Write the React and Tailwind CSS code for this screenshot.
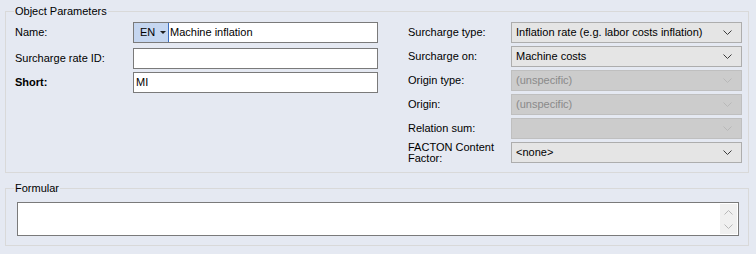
import React from "react";

const font = { fontFamily: '"Liberation Sans", Arial, sans-serif' };

function Chevron({ disabled, up }) {
  return (
    <svg width="9" height="5" viewBox="0 0 9 5" className="block">
      <polyline
        points={up ? "0.5,4.5 4.5,0.5 8.5,4.5" : "0.5,0.5 4.5,4.5 8.5,0.5"}
        fill="none"
        stroke={disabled ? "#b8b8b8" : "#3c3c3c"}
        strokeWidth="1"
      />
    </svg>
  );
}

function Combo({ value, disabled }) {
  return (
    <div
      className={`h-[21px] w-[231px] flex items-center justify-between pl-[4px] pr-[9px] border ${
        disabled
          ? "bg-[#cccccc] border-[#bfbfbf] text-[#8a8a8a]"
          : "bg-[#e5e5e5] border-[#adadad] text-black"
      }`}
    >
      <span className="whitespace-nowrap">{value}</span>
      <Chevron disabled={disabled} />
    </div>
  );
}

function GroupBox({ title, className, children }) {
  return (
    <div className={`relative border border-[#d9d9d9] ${className}`}>
      <span className="absolute -top-[8px] left-[8px] px-[1px] bg-[#e5e9f2] leading-[14px] text-black">
        {title}
      </span>
      {children}
    </div>
  );
}

const rightRows = [
  { label: "Surcharge type:", value: "Inflation rate (e.g. labor costs inflation)" },
  { label: "Surcharge on:", value: "Machine costs" },
  { label: "Origin type:", value: "(unspecific)", disabled: true },
  { label: "Origin:", value: "(unspecific)", disabled: true },
  { label: "Relation sum:", value: "", disabled: true },
];

export default function App() {
  return (
    <div
      className="w-[756px] h-[254px] bg-[#e5e9f2] text-[11px] text-black pt-[11px] pl-[5px] overflow-hidden"
      style={font}
    >
      <GroupBox title="Object Parameters" className="w-[744px] h-[162px]">
        <div className="flex pt-[10px]">
          {/* left column */}
          <div className="w-[372px] pl-[9px] flex flex-col">
            <div className="flex items-center h-[21px]">
              <span className="w-[118px]">Name:</span>
              <div className="h-[21px] w-[245px] border border-[#7a7a7a] bg-white flex items-stretch">
                <div className="w-[34px] bg-[#c5d6f0] flex items-center pl-[6px] gap-[5px]">
                  <span>EN</span>
                  <svg width="6" height="3" viewBox="0 0 6 3" className="block">
                    <polygon points="0,0 6,0 3,3" fill="#1f1f1f" />
                  </svg>
                </div>
                <div className="w-[1px] bg-[#3b6fc2]" />
                <span className="flex items-center pl-[1px]">Machine inflation</span>
              </div>
            </div>
            <div className="flex items-center h-[21px] mt-[5px]">
              <span className="w-[118px]">Surcharge rate ID:</span>
              <div className="h-[21px] w-[245px] border border-[#7a7a7a] bg-white" />
            </div>
            <div className="flex items-center h-[21px] mt-[3px]">
              <span className="w-[118px] font-bold">Short:</span>
              <div className="h-[21px] w-[245px] border border-[#7a7a7a] bg-white flex items-center pl-[2px]">
                MI
              </div>
            </div>
          </div>

          {/* right column */}
          <div className="pl-[30px] flex flex-col gap-[3px]">
            {rightRows.map((r) => (
              <div key={r.label} className="flex items-center h-[21px]">
                <span className="w-[103px]">{r.label}</span>
                <Combo value={r.value} disabled={r.disabled} />
              </div>
            ))}
            <div className="flex items-center h-[21px]">
              <span className="w-[103px] leading-[11px]">
                FACTON Content
                <br />
                Factor:
              </span>
              <Combo value="<none>" />
            </div>
          </div>
        </div>
      </GroupBox>

      <GroupBox title="Formular" className="w-[744px] h-[58px] mt-[15px]">
        <div className="pt-[13px] pl-[11px]">
          <div className="h-[34px] w-[722px] border border-[#7a7a7a] bg-white flex justify-end p-[1px]">
            <div className="w-[17px] bg-[#f0f0f0] flex flex-col items-center justify-center gap-[9px]">
              <Chevron disabled up />
              <Chevron disabled />
            </div>
          </div>
        </div>
      </GroupBox>
    </div>
  );
}
